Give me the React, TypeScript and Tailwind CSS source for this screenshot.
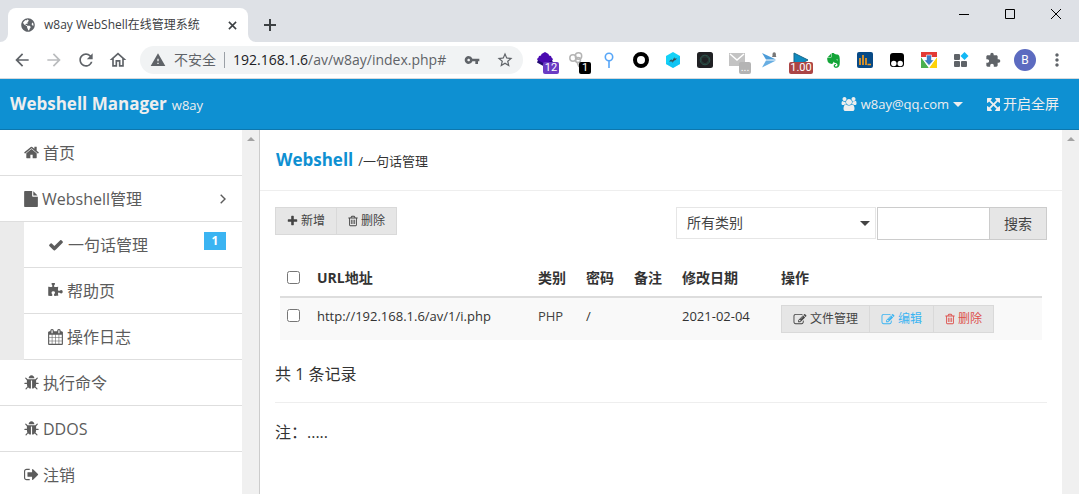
import React from 'react';
import {
  MdArrowBack,
  MdArrowForward,
  MdRefresh,
  MdOutlineHome,
  MdWarning,
  MdVpnKey,
  MdStarBorder,
  MdExtension,
  MdMoreVert,
} from 'react-icons/md';
import { FaEvernote, FaGlobeAmericas } from 'react-icons/fa';

type GlyphShape = { d: string; box?: string; small?: string; large?: string };
type GlyphProps = { shape: GlyphShape; className: string };

function Glyph({ shape, className }: GlyphProps) {
  return (
    <svg
      viewBox={shape.box ?? '0 0 1792 1792'}
      className={`shrink-0 ${className}`}
      fill="currentColor"
      aria-hidden="true"
    >
      <path d={shape.d} />
    </svg>
  );
}

const home: GlyphShape = {
  d: 'M1472 992v480q0 26-19 45t-45 19h-384v-384h-256v384h-384q-26 0-45-19t-19-45v-480q0-1 .5-3t.5-3l575-474 575 474q1 2 1 6zm223-69l-62 74q-8 9-21 11h-3q-13 0-21-7l-692-577-692 577q-12 8-24 7-13-2-21-11l-62-74q-8-10-7-23.5t11-21.5l719-599q32-26 76-26t76 26l244 204v-195q0-14 9-23t23-9h192q14 0 23 9t9 23v408l219 182q10 8 11 21.5t-7 23.5z',
  box: '64 64 1664 1664',
};
const file: GlyphShape = {
  d: 'M1152 512v-472q22 14 36 28l408 408q14 14 28 36h-472zm-128 32q0 40 28 68t68 28h544v1056q0 40-28 68t-68 28h-1344q-40 0-68-28t-28-68v-1600q0-40 28-68t68-28h800v544z',
  box: '128 0 1536 1792',
  large: 'h-4 w-[14px]',
};
const check: GlyphShape = {
  d: 'M1671 566q0 40-28 68l-724 724-136 136q-28 28-68 28t-68-28l-136-136-362-362q-28-28-28-68t28-68l136-136q28-28 68-28t68 28l294 295 656-657q28-28 68-28t68 28l136 136q28 28 28 68z',
  large: 'size-4',
};
const puzzle: GlyphShape = {
  d: 'M1755 1083q0 81-44.5 135t-123.5 54q-41 0-77.5-17.5t-59-38-56.5-38-71-17.5q-110 0-110 124 0 39 16 115t15 115v5q-22 0-33 1-34 3-97.5 11.5t-115.5 13.5-98 5q-61 0-103-26.5t-42-83.5q0-37 17.5-71t38-56.5 38-59 17.5-77.5q0-79-54-123.5t-135-44.5q-84 0-143 45.5t-59 127.5q0 43 15 83t33.5 64.5 33.5 53 15 50.5q0 45-46 89-37 35-117 35-95 0-245-24-9-2-27.5-4t-27.5-4l-13-2q-1 0-3-1-2 0-2-1v-1024q2 1 17.5 3.5t34 5 21.5 3.5q150 24 245 24 80 0 117-35 46-44 46-89 0-22-15-50.5t-33.5-53-33.5-64.5-15-83q0-82 59-127.5t144-45.5q80 0 134 44.5t54 123.5q0 41-17.5 77.5t-38 59-38 56.5-17.5 71q0 57 42 83.5t103 26.5q64 0 180-15t163-17v2q-1 2-3.5 17.5t-5 34-3.5 21.5q-24 150-24 245 0 80 35 117 44 46 89 46 22 0 50.5-15t53-33.5 64.5-33.5 83-15q82 0 127.5 59t45.5 143z',
  box: '64 64 1728 1728',
};
const calendar: GlyphShape = {
  d: 'M192 1664h288v-288h-288v288zm352 0h320v-288h-320v288zm-352-352h288v-320h-288v320zm352 0h320v-320h-320v320zm-352-384h288v-288h-288v288zm736 736h320v-288h-320v288zm-384-736h320v-288h-320v288zm768 736h288v-288h-288v288zm-384-352h320v-320h-320v320zm-352-864v-288q0-13-9.5-22.5t-22.5-9.5h-64q-13 0-22.5 9.5t-9.5 22.5v288q0 13 9.5 22.5t22.5 9.5h64q13 0 22.5-9.5t9.5-22.5zm736 864h288v-320h-288v320zm-384-384h320v-288h-320v288zm384 0h288v-288h-288v288zm32-480v-288q0-13-9.5-22.5t-22.5-9.5h-64q-13 0-22.5 9.5t-9.5 22.5v288q0 13 9.5 22.5t22.5 9.5h64q13 0 22.5-9.5t9.5-22.5zm384-64v1280q0 52-38 90t-90 38h-1408q-52 0-90-38t-38-90v-1280q0-52 38-90t90-38h128v-96q0-66 47-113t113-47h64q66 0 113 47t47 113v96h384v-96q0-66 47-113t113-47h64q66 0 113 47t47 113v96h128q52 0 90 38t38 90z',
  box: '64 0 1664 1792',
  large: 'h-4 w-[15px]',
};
const bug: GlyphShape = {
  d: 'M1696 960q0 26-19 45t-45 19h-224q0 171-67 290l208 209q19 19 19 45t-19 45q-18 19-45 19t-45-19l-198-197q-5 5-15 13t-42 28.5-65 36.5-82 29-97 13v-896h-128v896q-51 0-101.5-13.5t-87-33-66-39-43.5-32.5l-15-14-183 207q-20 21-48 21-24 0-43-16-19-18-20.5-44.5t15.5-46.5l202-227q-58-114-58-274h-224q-26 0-45-19t-19-45 19-45 45-19h224v-294l-173-173q-19-19-19-45t19-45 45-19 45 19l173 173h844l173-173q19-19 45-19t45 19 19 45-19 45l-173 173v294h224q26 0 45 19t19 45zm-480-576h-640q0-133 93.5-226.5t226.5-93.5 226.5 93.5 93.5 226.5z',
  box: '64 32 1664 1664',
};
const signOut: GlyphShape = {
  d: 'M704 1440q0 4 1 20t.5 26.5-3 23.5-10 19.5-20.5 6.5h-320q-119 0-203.5-84.5t-84.5-203.5v-704q0-119 84.5-203.5t203.5-84.5h320q13 0 22.5 9.5t9.5 22.5q0 4 1 20t.5 26.5-3 23.5-10 19.5-20.5 6.5h-320q-66 0-113 47t-47 113v704q0 66 47 113t113 47h312l11.5 1 11.5 3 8 5.5 7 9 2 13.5zm928-544q0 26-19 45l-544 544q-19 19-45 19t-45-19-19-45v-288h-448q-26 0-45-19t-19-45v-384q0-26 19-45t45-19h448v-288q0-26 19-45t45-19 45 19l544 544q19 19 19 45z',
  box: '64 64 1664 1664',
};
const plus: GlyphShape = {
  d: 'M1600 736v192q0 40-28 68t-68 28h-416v416q0 40-28 68t-68 28h-192q-40 0-68-28t-28-68v-416h-416q-40 0-68-28t-28-68v-192q0-40 28-68t68-28h416v-416q0-40 28-68t68-28h192q40 0 68 28t28 68v416h416q40 0 68 28t28 68z',
  box: '128 0 1536 1792',
  small: 'h-3 w-[11px]',
};
const trash: GlyphShape = {
  d: 'M704 736v576q0 14-9 23t-23 9h-64q-14 0-23-9t-9-23v-576q0-14 9-23t23-9h64q14 0 23 9t9 23zm256 0v576q0 14-9 23t-23 9h-64q-14 0-23-9t-9-23v-576q0-14 9-23t23-9h64q14 0 23 9t9 23zm256 0v576q0 14-9 23t-23 9h-64q-14 0-23-9t-9-23v-576q0-14 9-23t23-9h64q14 0 23 9t9 23zm128 724v-948h-896v948q0 22 7 40.5t14.5 27 10.5 8.5h832q3 0 10.5-8.5t14.5-27 7-40.5zm-672-1076h448l-48-117q-7-9-17-11h-317q-10 2-17 11zm928 32v64q0 14-9 23t-23 9h-96v948q0 83-47 143.5t-113 60.5h-832q-66 0-113-58.5t-47-141.5v-952h-96q-14 0-23-9t-9-23v-64q0-14 9-23t23-9h309l70-167q15-37 54-63t79-26h320q40 0 79 26t54 63l70 167h309q14 0 23 9t9 23z',
  box: '192 0 1408 1792',
  small: 'h-3 w-[10px]',
};
const edit: GlyphShape = {
  d: 'M888 1184l116-116-152-152-116 116v56h96v96h56zm440-720q-16-16-33 1l-350 350q-17 17-1 33t33-1l350-350q17-17 1-33zm80 594v190q0 119-84.5 203.5t-203.5 84.5h-832q-119 0-203.5-84.5t-84.5-203.5v-832q0-119 84.5-203.5t203.5-84.5h832q63 0 117 25 15 7 18 23 3 17-9 29l-49 49q-14 14-32 8-23-6-45-6h-832q-66 0-113 47t-47 113v832q0 66 47 113t113 47h832q66 0 113-47t47-113v-126q0-13 9-22l64-64q15-15 35-7t20 29zm-96-738l288 288-672 672h-288v-288zm444 132l-92 92-288-288 92-92q28-28 68-28t68 28l152 152q28 28 28 68t-28 68z',
  small: 'h-[13px] w-[14px]',
};
const users: GlyphShape = {
  d: 'M657 896q-162 5-265 128h-134q-82 0-138-40.5t-56-118.5q0-353 124-353 6 0 43.5 21t97.5 42.5 119 21.5q67 0 133-23-5 37-5 66 0 159 90 296zm1071 637q0 120-73 189.5t-194 69.5h-874q-121 0-194-69.5t-73-189.5q0-53 3.5-103.5t14-109 26.5-108.5 43-97.5 62-81 85.5-53.5 111.5-20q10 0 43 21.5t73 48 107 48 135 21.5 135-21.5 107-48 73-48 43-21.5q61 0 111.5 20t85.5 53.5 62 81 43 97.5 26.5 108.5 14 109 3.5 103.5zm-1024-1277q0 106-75 181t-181 75-181-75-75-181 75-181 181-75 181 75 75 181zm704 384q0 159-112.5 271.5t-271.5 112.5-271.5-112.5-112.5-271.5 112.5-271.5 271.5-112.5 271.5 112.5 112.5 271.5zm576 225q0 78-56 118.5t-138 40.5h-134q-103-123-265-128 90-137 90-296 0-29-5-66 66 23 133 23 59 0 119-21.5t97.5-42.5 43.5-21q124 0 124 353zm-128-609q0 106-75 181t-181 75-181-75-75-181 75-181 181-75 181 75 75 181z',
  box: '64 0 1920 1792',
};
const expand: GlyphShape = {
  d: 'M1411 541l-355 355 355 355 144-144q29-31 70-14 39 17 39 59v448q0 26-19 45t-45 19h-448q-42 0-59-40-17-39 14-69l144-144-355-355-355 355 144 144q31 30 14 69-17 40-59 40h-448q-26 0-45-19t-19-45v-448q0-42 40-59 39-17 69 14l144 144 355-355-355-355-144 144q-19 19-45 19-12 0-24-5-40-17-40-59v-448q0-26 19-45t45-19h448q42 0 59 40 17 39-14 69l-144 144 355 355 355-355-144-144q-31-30-14-69 17-40 59-40h448q26 0 45 19t19 45v448q0 42-39 59-13 5-25 5-26 0-45-19z',
  box: '128 128 1536 1536',
};

function Caret({ className = '' }: { className?: string }) {
  return (
    <svg viewBox="0 0 10 5" className={`h-[5px] w-[10px] shrink-0 ${className}`} fill="currentColor" aria-hidden="true">
      <path d="M0 0h10L5 5z" />
    </svg>
  );
}

function TabStrip() {
  return (
    <div className="flex h-[42px] shrink-0 items-end bg-[#dee1e6]">
      <svg viewBox="0 0 8 8" className="size-2 shrink-0" fill="#fff" aria-hidden="true">
        <path d="M8 0v8H0a8 8 0 0 0 8-8z" />
      </svg>
      <div className="flex h-[34px] w-60 items-center rounded-t-lg bg-white pr-2 pl-3 text-[#3c4043]">
        <FaGlobeAmericas className="size-4 shrink-0 p-px text-[#5f6368]" />
        <span className="ml-2 flex-1 text-xs whitespace-nowrap">w8ay WebShell在线管理系统</span>
        <button type="button" aria-label="关闭标签页" className="grid size-4 place-items-center">
          <svg viewBox="0 0 10 10" className="size-[9px]" stroke="#3c4043" strokeWidth="1.7" aria-hidden="true">
            <path d="M1 1l8 8M9 1l-8 8" />
          </svg>
        </button>
      </div>
      <svg viewBox="0 0 8 8" className="size-2 shrink-0" fill="#fff" aria-hidden="true">
        <path d="M0 0v8h8a8 8 0 0 1-8-8z" />
      </svg>
      <button type="button" aria-label="新标签页" className="mb-2 ml-[5px] grid size-[18px] place-items-center text-[#3c4043]">
        <svg viewBox="0 0 12 12" className="size-3" stroke="currentColor" strokeWidth="2" aria-hidden="true">
          <path d="M6 0v12M0 6h12" />
        </svg>
      </button>
      <div className="ml-auto flex self-start">
        <button type="button" aria-label="最小化" className="grid h-7 w-[46px] place-items-center">
          <svg viewBox="0 0 10 10" className="size-[10px]" stroke="#000" aria-hidden="true">
            <path d="M0 5.5h10" />
          </svg>
        </button>
        <button type="button" aria-label="最大化" className="grid h-7 w-[46px] place-items-center">
          <svg viewBox="0 0 10 10" className="size-[10px]" stroke="#000" fill="none" aria-hidden="true">
            <path d="M.5.5h9v9h-9z" />
          </svg>
        </button>
        <button type="button" aria-label="关闭" className="grid h-7 w-[46px] place-items-center">
          <svg viewBox="0 0 10 10" className="size-[10px]" stroke="#000" aria-hidden="true">
            <path d="M0 0l10 10M10 0L0 10" />
          </svg>
        </button>
      </div>
    </div>
  );
}

function ToolButton({ label, children }: { label: string; children: React.ReactNode }) {
  return (
    <button type="button" aria-label={label} className="relative grid h-9 w-8 shrink-0 place-items-center">
      {children}
    </button>
  );
}

function Badge({ className, children }: { className: string; children: React.ReactNode }) {
  return (
    <span className={`absolute top-5 h-3 rounded-xs text-center font-[Roboto] text-[11px] leading-3 text-white ${className}`}>
      {children}
    </span>
  );
}

function Extensions() {
  return (
    <div className="flex">
      <ToolButton label="Extension 1">
        <svg viewBox="0 0 16 16" className="size-4" aria-hidden="true">
          <path d="M1 8l-1 2.500 8 4.500 8-4.500L15 8z" fill="#220a72" />
          <path d="M8 0l3.500 2 .5 1.500 2 .5.500 1.500L16 7l-.5 1L8 12 .5 8 0 7l1.500-1.500L2 4l2-.5.500-1.500z" fill="#4a0bb0" />
        </svg>
        <Badge className="left-[14px] w-4 bg-[#6b3cc4]">12</Badge>
      </ToolButton>
      <ToolButton label="Extension 2">
        <svg viewBox="0 0 16 16" className="size-4" fill="none" stroke="#b4b4b4" strokeWidth="1.500" aria-hidden="true">
          <circle cx="4" cy="6" r="3.200" />
          <circle cx="9.500" cy="4" r="3.200" />
          <circle cx="9" cy="8" r="2.500" />
          <path d="M8 10l2 5" />
        </svg>
        <Badge className="left-[18px] w-3 bg-black">1</Badge>
      </ToolButton>
      <ToolButton label="Extension 3">
        <svg viewBox="0 0 16 16" className="size-4" fill="none" stroke="#57a6f8" strokeWidth="1.6" aria-hidden="true">
          <circle cx="8" cy="5" r="3.700" />
          <path d="M8 9v7" />
        </svg>
      </ToolButton>
      <ToolButton label="Extension 4">
        <svg viewBox="0 0 16 16" className="size-4" aria-hidden="true">
          <circle cx="8" cy="8" r="6" fill="none" stroke="#000" strokeWidth="4" />
        </svg>
      </ToolButton>
      <ToolButton label="Extension 5">
        <svg viewBox="0 0 16 16" className="size-4" aria-hidden="true">
          <path d="M8 0l7 4v8l-7 4-7-4V4z" fill="#14d2f7" />
          <path d="M8 16l7-4V4L1 12z" fill="#0aaef0" opacity=".4" />
          <path d="M4 9.500L6.500 7v1.200h1L9.500 5v1.500H12L9.500 9V7.800l-2 3.200V9.500z" fill="#3d4a50" />
        </svg>
      </ToolButton>
      <ToolButton label="Extension 6">
        <svg viewBox="0 0 16 16" className="size-4" fill="none" aria-hidden="true">
          <rect width="16" height="16" rx="2.500" fill="#202124" />
          <circle cx="8" cy="8" r="4.800" stroke="#2f5a50" />
          <path d="M5 5l6 0 1 4-4 3-4-3zM8 3l4 4-2 5-5-1-1-5z" stroke="#2a4640" strokeWidth=".6" />
        </svg>
      </ToolButton>
      <ToolButton label="Extension 7">
        <svg viewBox="0 0 16 16" className="size-4" aria-hidden="true">
          <path d="M0 1h16v13H0z" fill="#c3c3c3" />
          <path d="M1 2l7 6 7-6" fill="none" stroke="#fff" strokeWidth="1.500" />
        </svg>
        <Badge className="left-[18px] w-3 bg-[#b4b4b4]">...</Badge>
      </ToolButton>
      <ToolButton label="Extension 8">
        <svg viewBox="0 0 16 16" className="size-4" aria-hidden="true">
          <path d="M1 1l14 6.500H5z" fill="#4b9bd8" />
          <path d="M5 8.500h10L1 15.500z" fill="#68aee2" />
          <path d="M11.500 4V2a1.700 1.700 0 0 1 3.400 0v2l.6 1h-4.600z" fill="#777" />
        </svg>
      </ToolButton>
      <ToolButton label="Extension 9">
        <svg viewBox="0 0 16 16" className="size-4" aria-hidden="true">
          <path d="M1 1l14 7L1 15z" fill="#0f8bc0" stroke="#176789" />
        </svg>
        <Badge className="left-1 w-6 bg-[#ab4545]">1.00</Badge>
      </ToolButton>
      <ToolButton label="Evernote">
        <FaEvernote className="size-[17px] text-[#13a538]" />
      </ToolButton>
      <ToolButton label="Extension 11">
        <svg viewBox="0 0 16 16" className="size-4" aria-hidden="true">
          <rect width="16" height="16" rx="2" fill="#084a86" />
          <path d="M3 6v7M6 3v10M9 6v7M10.500 12.500h3.500" stroke="#f39a1d" strokeWidth="1.700" />
        </svg>
      </ToolButton>
      <ToolButton label="Extension 12">
        <svg viewBox="0 0 16 16" className="size-4" aria-hidden="true">
          <rect x="1" y="1" width="14" height="14" rx="3" fill="#000" />
          <circle cx="4.800" cy="11.500" r="2.700" fill="#fff" />
          <circle cx="11.200" cy="11.500" r="2.700" fill="#fff" />
        </svg>
      </ToolButton>
      <ToolButton label="Extension 13">
        <svg viewBox="0 0 16 16" className="size-4" aria-hidden="true">
          <path d="M0 0h16v5H0z" fill="#e33b35" />
          <path d="M0 5l8 11H0z" fill="#4bb04f" />
          <path d="M16 5v11H8z" fill="#fdd20a" />
          <path d="M0 5h16L8 16z" fill="#fff" />
          <path d="M5.500 3h5v5h2.500l-5 5.500L3 8h2.500z" fill="#3b7cc4" stroke="#fff" strokeWidth=".6" />
        </svg>
      </ToolButton>
      <ToolButton label="Extension 14">
        <svg viewBox="0 0 16 16" className="size-4" aria-hidden="true">
          <g fill="#5f6368">
            <rect x="1" y="2" width="6" height="6" rx="1" />
            <rect x="1" y="9" width="6" height="6" rx="1" />
            <rect x="8" y="9" width="6" height="6" rx="1" />
          </g>
          <path d="M11.500 0l4 4-4 4-4-4z" fill="#12b8f5" />
        </svg>
      </ToolButton>
      <ToolButton label="扩展程序">
        <MdExtension className="size-4 text-[#5f6368]" />
      </ToolButton>
      <ToolButton label="用户 B">
        <span className="grid size-[22px] place-items-center rounded-full bg-[#5c6bc0] font-[Roboto] text-xs leading-none text-white">
          B
        </span>
      </ToolButton>
      <ToolButton label="菜单">
        <MdMoreVert className="size-5 text-[#5f6368]" />
      </ToolButton>
    </div>
  );
}

function Toolbar() {
  return (
    <div className="flex h-[37px] shrink-0 items-center border-b border-[#d5d8dc] bg-white px-[6px] text-[#5f6368]">
      <ToolButton label="后退">
        <MdArrowBack className="size-5" />
      </ToolButton>
      <ToolButton label="前进">
        <MdArrowForward className="size-5 text-[#babcbe]" />
      </ToolButton>
      <ToolButton label="刷新">
        <MdRefresh className="size-5" />
      </ToolButton>
      <ToolButton label="主页">
        <MdOutlineHome className="size-5" />
      </ToolButton>
      <div className="mx-[6px] flex h-7 min-w-0 flex-1 items-center rounded-full bg-[#f1f3f4] pr-[9px] pl-[10px] text-sm">
        <MdWarning className="size-4 shrink-0" />
        <span className="ml-2 whitespace-nowrap">不安全</span>
        <span className="mx-2 h-4 w-px shrink-0 bg-[#9aa0a6]" />
        <span className="min-w-0 flex-1 overflow-hidden whitespace-nowrap">
          <span className="text-[#202124]">192.168.1.6</span>/av/w8ay/index.php#
        </span>
        <button type="button" aria-label="管理密码" className="mr-4">
          <MdVpnKey className="size-4" />
        </button>
        <button type="button" aria-label="加入书签">
          <MdStarBorder className="size-[18px]" />
        </button>
      </div>
      <Extensions />
    </div>
  );
}

function AppHeader() {
  return (
    <header className="flex h-[51px] shrink-0 items-center justify-between border-b border-[#0c77ae] bg-[#0e90d2] pr-5 pl-[10px] text-[#eee]">
      <div className="flex items-baseline gap-[5px]">
        <strong className="text-[17px] leading-6">Webshell Manager</strong>
        <small className="text-[13px]">w8ay</small>
      </div>
      <nav className="flex items-center gap-6 text-sm">
        <a href="#" className="flex items-center gap-1">
          <Glyph shape={users} className="h-[14px] w-4" />
          <span className="text-[13px]">w8ay@qq.com</span>
          <Caret />
        </a>
        <a href="#" className="flex items-center gap-[3px]">
          <Glyph shape={expand} className="size-[13px]" />
          开启全屏
        </a>
      </nav>
    </header>
  );
}

function MenuItem({ icon, label, children }: { icon: GlyphShape; label: string; children?: React.ReactNode }) {
  return (
    <li>
      <a href="#" className="flex h-[46px] items-center gap-1 border-b border-[#dedede] bg-white pr-4 pl-6">
        <Glyph shape={icon} className={icon.large ?? 'size-[15px]'} />
        <span className="whitespace-nowrap">{label}</span>
        {children}
      </a>
    </li>
  );
}

function ScrollTrack() {
  return (
    <div className="flex w-[17px] shrink-0 justify-center bg-[#f0f0f0] pt-[7px]">
      <svg viewBox="0 0 8 4" className="h-1 w-2" fill="#a3a3a3" aria-hidden="true">
        <path d="M0 4l4-4 4 4z" />
      </svg>
    </div>
  );
}

function Sidebar() {
  return (
    <aside className="flex w-[260px] shrink-0 border-r border-[#ccc]">
      <ul className="min-w-0 flex-1 overflow-hidden text-base text-[#5c5c5c]">
        <MenuItem icon={home} label="首页" />
        <MenuItem icon={file} label="Webshell管理">
          <svg viewBox="0 0 6 10" className="ml-auto h-[10px] w-[6px]" fill="none" stroke="#5c5c5c" strokeWidth="1.400" aria-hidden="true">
            <path d="M.7.7L5 5 .7 9.300" />
          </svg>
        </MenuItem>
        <li className="bg-[#ebebeb] pl-6">
          <ul>
            <MenuItem icon={check} label="一句话管理">
              <span className="mb-2 ml-auto h-[18px] w-[22px] bg-[#3bb4f2] text-center text-xs leading-[18px] font-bold text-white">
                1
              </span>
            </MenuItem>
            <MenuItem icon={puzzle} label="帮助页" />
            <MenuItem icon={calendar} label="操作日志" />
          </ul>
        </li>
        <MenuItem icon={bug} label="执行命令" />
        <MenuItem icon={bug} label="DDOS" />
        <MenuItem icon={signOut} label="注销" />
      </ul>
      <ScrollTrack />
    </aside>
  );
}

function SmallButton({ icon, label, tone = 'text-[#444]' }: { icon: GlyphShape; label: string; tone?: string }) {
  return (
    <button
      type="button"
      className={`-ml-px flex h-7 items-center gap-[3px] border border-[#d9d9d9] bg-[#e6e6e6] px-[11px] text-xs whitespace-nowrap first:ml-0 ${tone}`}
    >
      <Glyph shape={icon} className={icon.small ?? 'size-3'} />
      {label}
    </button>
  );
}

function Filters() {
  return (
    <div className="flex items-start justify-between">
      <div className="flex">
        <SmallButton icon={plus} label="新增" />
        <SmallButton icon={trash} label="删除" />
      </div>
      <form className="flex gap-px text-sm text-[#444]" onSubmit={(e) => e.preventDefault()}>
        <div className="relative w-[200px]">
          <select aria-label="类别" className="h-8 w-full appearance-none border border-[#e6e6e6] bg-white px-[10px]">
            <option>所有类别</option>
          </select>
          <Caret className="pointer-events-none absolute top-[14px] right-[6px]" />
        </div>
        <div className="flex">
          <input type="text" aria-label="关键字" className="h-[33px] w-[113px] border border-[#ccc] bg-white px-2 outline-none" />
          <button type="submit" className="-ml-px h-[33px] border border-[#ccc] bg-[#e6e6e6] px-[14px]">
            搜索
          </button>
        </div>
      </form>
    </div>
  );
}

function RecordsTable() {
  return (
    <div className="mt-[19px] px-[5px]">
      <table className="w-full table-fixed border-collapse text-left text-[13px] leading-5 text-[#333]">
        <colgroup>
          <col className="w-[29px]" />
          <col className="w-[29%]" />
          <col className="w-12" />
          <col className="w-12" />
          <col className="w-12" />
          <col className="w-[99px]" />
          <col />
        </colgroup>
        <thead className="text-sm leading-5">
          <tr className="h-[38px] border-b-2 border-[#ddd] align-middle">
            <th className="pl-[7px]">
              <input type="checkbox" aria-label="全选" className="block size-[13px]" />
            </th>
            <th className="px-2">URL地址</th>
            <th className="px-2 whitespace-nowrap">类别</th>
            <th className="px-2 whitespace-nowrap">密码</th>
            <th className="px-2 whitespace-nowrap">备注</th>
            <th className="px-2 whitespace-nowrap">修改日期</th>
            <th className="px-2">操作</th>
          </tr>
        </thead>
        <tbody>
          <tr className="h-[43px] bg-[#f9f9f9] align-top">
            <td className="pt-[11px] pl-[7px]">
              <input type="checkbox" aria-label="选择记录" className="block size-[13px]" />
            </td>
            <td className="px-2 pt-2 whitespace-nowrap">http://192.168.1.6/av/1/i.php</td>
            <td className="px-2 pt-2">
              <a href="#" className="text-[#444]">PHP</a>
            </td>
            <td className="px-2 pt-2">/</td>
            <td className="px-2 pt-2" />
            <td className="px-2 pt-2 whitespace-nowrap">2021-02-04</td>
            <td className="px-2 pt-[7px]">
              <div className="flex">
                <SmallButton icon={edit} label="文件管理" />
                <SmallButton icon={edit} label="编辑" tone="text-[#3bb4f2]" />
                <SmallButton icon={trash} label="删除" tone="text-[#dd514c]" />
              </div>
            </td>
          </tr>
        </tbody>
      </table>
    </div>
  );
}

function Content() {
  return (
    <main className="min-w-0 flex-1 overflow-hidden bg-white text-[#333]">
      <h1 className="flex h-[61px] items-center border-b border-[#eee] px-4">
        <span className="flex items-baseline gap-[5px]">
          <strong className="text-[17px] leading-6 text-[#0e90d2]">Webshell</strong>
          <small className="text-[13px]">/一句话管理</small>
        </span>
      </h1>
      <div className="px-[15px] pt-4">
        <Filters />
        <RecordsTable />
        <p className="mt-[22px] text-base leading-6">共 1 条记录</p>
        <hr className="mt-4 mb-[17px] border-[#eee]" />
        <p className="text-base leading-6">注：.....</p>
      </div>
    </main>
  );
}

export default function App() {
  return (
    <div className="flex h-screen flex-col overflow-hidden bg-white font-['Open_Sans','Noto_Sans_CJK_SC',sans-serif]">
      <TabStrip />
      <Toolbar />
      <AppHeader />
      <div className="flex min-h-0 flex-1">
        <Sidebar />
        <Content />
        <ScrollTrack />
      </div>
    </div>
  );
}
